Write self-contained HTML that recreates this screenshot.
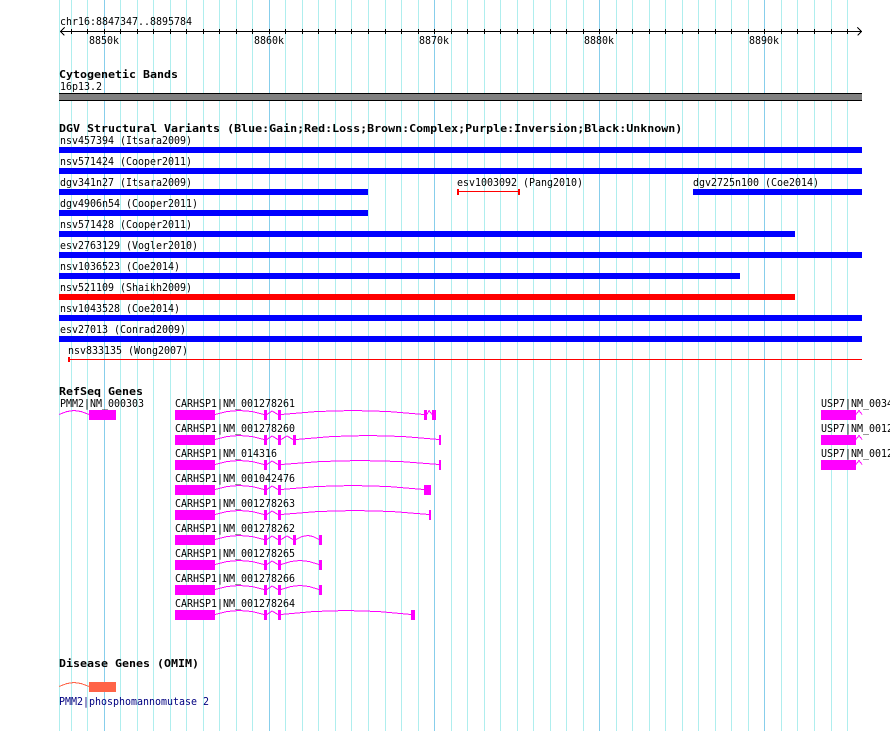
<!DOCTYPE html>
<html><head><meta charset="utf-8"><style>
html,body{margin:0;padding:0;background:#fff}
#w{position:relative;width:890px;height:731px;overflow:hidden;background:#fff}
svg{position:absolute;left:0;top:0}
.t,.b{position:absolute;white-space:pre;font-family:"DejaVu Sans Mono","Liberation Mono",monospace;line-height:13px;transform-origin:0 0;color:#000}
.t{font-size:11px;transform:scaleX(.9063)}
.b{font-size:11px;font-weight:bold;transform:scaleX(1.0574)}
</style></head><body><div id="w">
<svg width="890" height="731" shape-rendering="crispEdges">
<path fill="none" stroke="#afeeee" d="M59.5 0V731M71.5 0V731M87.5 0V731M120.5 0V731M137.5 0V731M153.5 0V731M170.5 0V731M186.5 0V731M203.5 0V731M219.5 0V731M236.5 0V731M252.5 0V731M285.5 0V731M302.5 0V731M318.5 0V731M335.5 0V731M351.5 0V731M368.5 0V731M385.5 0V731M401.5 0V731M418.5 0V731M451.5 0V731M467.5 0V731M484.5 0V731M500.5 0V731M517.5 0V731M533.5 0V731M550.5 0V731M566.5 0V731M583.5 0V731M616.5 0V731M632.5 0V731M649.5 0V731M665.5 0V731M682.5 0V731M698.5 0V731M715.5 0V731M731.5 0V731M748.5 0V731M781.5 0V731M797.5 0V731M814.5 0V731M831.5 0V731M847.5 0V731"/>
<path fill="none" stroke="#87ceeb" d="M104.5 0V731M269.5 0V731M434.5 0V731M599.5 0V731M764.5 0V731"/>
<!-- axis -->
<path fill="none" stroke="#000" d="M60 31.5H862M64.5 27.5L60.5 31.5L64.5 35.5M857.5 27.5L861.5 31.5L857.5 35.5M71.5 29V34M87.5 29V34M104.5 29V34M120.5 29V34M137.5 29V34M153.5 29V34M170.5 29V34M186.5 29V34M203.5 29V34M219.5 29V34M236.5 29V34M252.5 29V34M269.5 29V34M285.5 29V34M302.5 29V34M318.5 29V34M335.5 29V34M351.5 29V34M368.5 29V34M385.5 29V34M401.5 29V34M418.5 29V34M434.5 29V34M451.5 29V34M467.5 29V34M484.5 29V34M500.5 29V34M517.5 29V34M533.5 29V34M550.5 29V34M566.5 29V34M583.5 29V34M599.5 29V34M616.5 29V34M632.5 29V34M649.5 29V34M665.5 29V34M682.5 29V34M698.5 29V34M715.5 29V34M731.5 29V34M748.5 29V34M764.5 29V34M781.5 29V34M797.5 29V34M814.5 29V34M831.5 29V34M847.5 29V34"/>
<!-- cyto -->
<rect x="59" y="93" width="803" height="8" fill="#000"/>
<rect x="59" y="94" width="803" height="6" fill="#808080"/>
<!-- DGV -->
<g fill="#0000ff">
<rect x="59" y="147" width="803" height="6"/>
<rect x="59" y="168" width="803" height="6"/>
<rect x="59" y="189" width="309" height="6"/>
<rect x="693" y="189" width="169" height="6"/>
<rect x="59" y="210" width="309" height="6"/>
<rect x="59" y="231" width="736" height="6"/>
<rect x="59" y="252" width="803" height="6"/>
<rect x="59" y="273" width="681" height="6"/>
<rect x="59" y="315" width="803" height="6"/>
<rect x="59" y="336" width="803" height="6"/>
</g>
<g fill="#ff0000">
<rect x="59" y="294" width="736" height="6"/>
<rect x="458" y="191" width="62" height="1"/>
<rect x="457" y="189" width="2" height="6"/>
<rect x="518" y="189" width="2" height="6"/>
<rect x="68" y="359" width="794" height="1"/>
<rect x="68" y="357" width="2" height="5"/>
</g>
<!-- genes -->
<g fill="#ff00ff" stroke="none">
<rect x="89" y="410" width="27" height="10"/>
<rect x="821" y="410" width="35" height="10"/>
<rect x="821" y="435" width="35" height="10"/>
<rect x="821" y="460" width="35" height="10"/>
<rect x="175" y="410" width="40" height="10"/><rect x="264" y="410" width="3" height="10"/><rect x="278" y="410" width="3" height="10"/><rect x="424" y="410" width="3" height="10"/><rect x="432" y="410" width="4" height="10"/>
<rect x="175" y="435" width="40" height="10"/><rect x="264" y="435" width="3" height="10"/><rect x="278" y="435" width="3" height="10"/><rect x="293" y="435" width="3" height="10"/><rect x="439" y="435" width="2" height="10"/>
<rect x="175" y="460" width="40" height="10"/><rect x="264" y="460" width="3" height="10"/><rect x="278" y="460" width="3" height="10"/><rect x="439" y="460" width="2" height="10"/>
<rect x="175" y="485" width="40" height="10"/><rect x="264" y="485" width="3" height="10"/><rect x="278" y="485" width="3" height="10"/><rect x="424" y="485" width="7" height="10"/>
<rect x="175" y="510" width="40" height="10"/><rect x="264" y="510" width="3" height="10"/><rect x="278" y="510" width="3" height="10"/><rect x="429" y="510" width="2" height="10"/>
<rect x="175" y="535" width="40" height="10"/><rect x="264" y="535" width="3" height="10"/><rect x="278" y="535" width="3" height="10"/><rect x="293" y="535" width="3" height="10"/><rect x="319" y="535" width="3" height="10"/>
<rect x="175" y="560" width="40" height="10"/><rect x="264" y="560" width="3" height="10"/><rect x="278" y="560" width="3" height="10"/><rect x="319" y="560" width="3" height="10"/>
<rect x="175" y="585" width="40" height="10"/><rect x="264" y="585" width="3" height="10"/><rect x="278" y="585" width="3" height="10"/><rect x="319" y="585" width="3" height="10"/>
<rect x="175" y="610" width="40" height="10"/><rect x="264" y="610" width="3" height="10"/><rect x="278" y="610" width="3" height="10"/><rect x="411" y="610" width="4" height="10"/>
</g>
<g fill="none" stroke="#ff00ff">
<path d="M59 414.5l8-3l7-1l7 1l8 3M856 414.5l3-4l3 4"/>
<path d="M856 439.5l3-4l3 4M856 464.5l3-4l3 4"/>
<path d="M215 414.5l12-3l12-1l13 1l12 3M267 414.5l5-3.5l6 3.5M281 414.5l36-3l36-1l35 1l36 3M427 414.5l2-4l3 4"/>
<path d="M215 439.5l12-3l12-1l13 1l12 3M267 439.5l5-3.5l6 3.5M281 439.5l6-3.5l6 3.5M296 439.5l36-3l36-1l35 1l36 3"/>
<path d="M215 464.5l12-3l12-1l13 1l12 3M267 464.5l5-3.5l6 3.5M281 464.5l40-3l39-1l40 1l39 3"/>
<path d="M215 489.5l12-3l12-1l13 1l12 3M267 489.5l5-3.5l6 3.5M281 489.5l36-3l36-1l35 1l36 3"/>
<path d="M215 514.5l12-3l12-1l13 1l12 3M267 514.5l5-3.5l6 3.5M281 514.5l37-3l37-1l37 1l37 3"/>
<path d="M215 539.5l12-3l12-1l13 1l12 3M267 539.5l5-3.5l6 3.5M281 539.5l6-3.5l6 3.5M296 539.5l6-3l6-1l5 1l6 3"/>
<path d="M215 564.5l12-3l12-1l13 1l12 3M267 564.5l5-3.5l6 3.5M281 564.5l10-3l9-1l9 1l10 3"/>
<path d="M215 589.5l12-3l12-1l13 1l12 3M267 589.5l5-3.5l6 3.5M281 589.5l10-3l9-1l9 1l10 3"/>
<path d="M215 614.5l12-3l12-1l13 1l12 3M267 614.5l5-3.5l6 3.5M281 614.5l33-3l32-1l32 1l33 3"/>
</g>
<rect x="89" y="682" width="27" height="10" fill="#ff6347"/>
<path fill="none" stroke="#ff6347" d="M59 686.5l8-3l7-1l7 1l8 3"/>
</svg>
<div class="t" style="left:60px;top:15px">chr16:8847347..8895784</div>
<div class="t" style="left:89px;top:34px">8850k</div>
<div class="t" style="left:254px;top:34px">8860k</div>
<div class="t" style="left:419px;top:34px">8870k</div>
<div class="t" style="left:584px;top:34px">8880k</div>
<div class="t" style="left:749px;top:34px">8890k</div>
<div class="b" style="left:59px;top:68px">Cytogenetic Bands</div>
<div class="t" style="left:60px;top:80px">16p13.2</div>
<div class="b" style="left:59px;top:122px">DGV Structural Variants (Blue:Gain;Red:Loss;Brown:Complex;Purple:Inversion;Black:Unknown)</div>
<div class="t" style="left:60px;top:134px">nsv457394 (Itsara2009)</div>
<div class="t" style="left:60px;top:155px">nsv571424 (Cooper2011)</div>
<div class="t" style="left:60px;top:176px">dgv341n27 (Itsara2009)</div>
<div class="t" style="left:457px;top:176px">esv1003092 (Pang2010)</div>
<div class="t" style="left:693px;top:176px">dgv2725n100 (Coe2014)</div>
<div class="t" style="left:60px;top:197px">dgv4906n54 (Cooper2011)</div>
<div class="t" style="left:60px;top:218px">nsv571428 (Cooper2011)</div>
<div class="t" style="left:60px;top:239px">esv2763129 (Vogler2010)</div>
<div class="t" style="left:60px;top:260px">nsv1036523 (Coe2014)</div>
<div class="t" style="left:60px;top:281px">nsv521109 (Shaikh2009)</div>
<div class="t" style="left:60px;top:302px">nsv1043528 (Coe2014)</div>
<div class="t" style="left:60px;top:323px">esv27013 (Conrad2009)</div>
<div class="t" style="left:68px;top:344px">nsv833135 (Wong2007)</div>
<div class="b" style="left:59px;top:385px">RefSeq Genes</div>
<div class="t" style="left:60px;top:397px">PMM2|NM_000303</div>
<div class="t" style="left:175px;top:397px">CARHSP1|NM_001278261</div>
<div class="t" style="left:175px;top:422px">CARHSP1|NM_001278260</div>
<div class="t" style="left:175px;top:447px">CARHSP1|NM_014316</div>
<div class="t" style="left:175px;top:472px">CARHSP1|NM_001042476</div>
<div class="t" style="left:175px;top:497px">CARHSP1|NM_001278263</div>
<div class="t" style="left:175px;top:522px">CARHSP1|NM_001278262</div>
<div class="t" style="left:175px;top:547px">CARHSP1|NM_001278265</div>
<div class="t" style="left:175px;top:572px">CARHSP1|NM_001278266</div>
<div class="t" style="left:175px;top:597px">CARHSP1|NM_001278264</div>
<div class="t" style="left:821px;top:397px">USP7|NM_0034</div>
<div class="t" style="left:821px;top:422px">USP7|NM_0012</div>
<div class="t" style="left:821px;top:447px">USP7|NM_0012</div>
<div class="b" style="left:59px;top:657px">Disease Genes (OMIM)</div>
<div class="t" style="left:59px;top:695px;color:#000080">PMM2|phosphomannomutase 2</div>
</div></body></html>
